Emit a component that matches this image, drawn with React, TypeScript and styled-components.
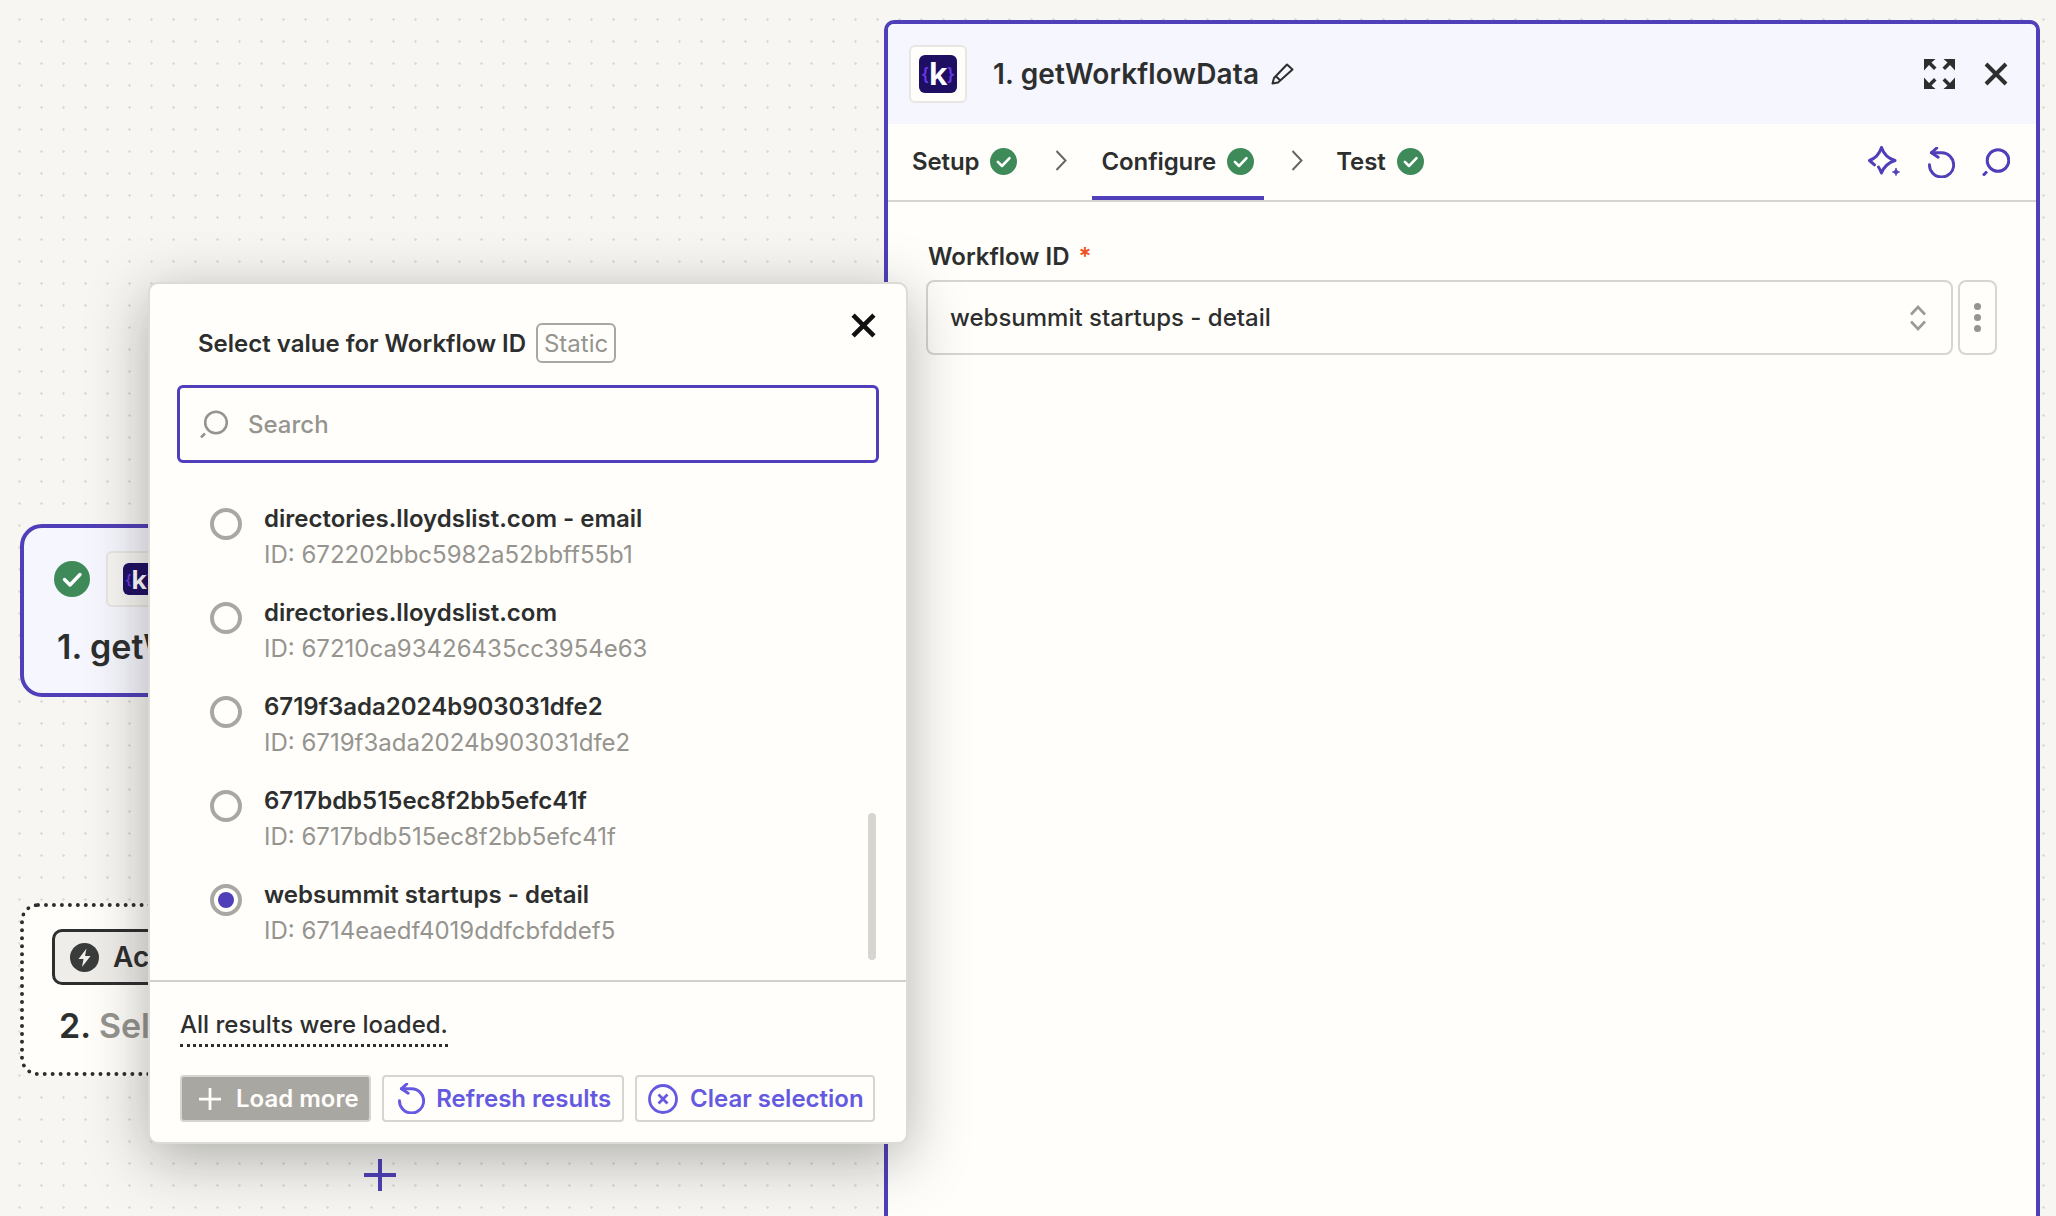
import React from "react";
import styled, { createGlobalStyle } from "styled-components";

const purple = "#4f3fb8";
const ink = "#2d2e2e";
const grey = "#95948f";
const line = "#d6d5d0";
const paper = "#fffefb";
const link = "#6459e0";

const GlobalStyle = createGlobalStyle`
  html, body {
    margin: 0;
    height: 100%;
    overflow: hidden;
  }
  body {
    font-family: Inter, "Liberation Sans", sans-serif;
    color: ${ink};
  }
  svg {
    display: block;
    flex: none;
  }
`;

const Canvas = styled.div`
  position: relative;
  width: 2056px;
  height: 1216px;
  overflow: hidden;
  display: flex;
  justify-content: flex-end;
  padding: 20px 16px 0 0;
  box-sizing: border-box;
  background-color: #f7f6f3;
  background-image: radial-gradient(circle at 19.5px 19.5px, #dcdbd6 1px, transparent 1.5px);
  background-size: 22px 22px;
`;

/* nodes sit on the free canvas, the modal covers their right side */
const Node = styled.div<{ $top: number; $dotted?: boolean }>`
  position: absolute;
  left: 20px;
  top: ${(p) => p.$top}px;
  width: 440px;
  height: 173px;
  box-sizing: border-box;
  border-radius: ${(p) => (p.$dotted ? 18 : 22)}px;
  border: 4px ${(p) => (p.$dotted ? `dotted ${ink}` : `solid ${purple}`)};
  background: ${(p) => (p.$dotted ? paper : "#f6f6fe")};
  padding: ${(p) => (p.$dotted ? "22px 0 0 28px" : "23px 0 0 30px")};
`;

const NodeTop = styled.div`
  display: flex;
  align-items: center;
  gap: 16px;
`;

const NodeTitle = styled.div<{ $dotted?: boolean }>`
  white-space: nowrap;
  font-size: 34px;
  font-weight: 600;
  line-height: 40px;
  margin: ${(p) => (p.$dotted ? "21px 0 0 7px" : "20px 0 0 3px")};
`;

const NodeHint = styled.span`
  color: ${grey};
`;

const ActionPill = styled.div`
  display: flex;
  align-items: center;
  gap: 14px;
  width: 170px;
  height: 56px;
  box-sizing: border-box;
  padding-left: 15px;
  border: 3px solid ${ink};
  border-radius: 10px;
  background: #eeedea;
  font-size: 28px;
  font-weight: 600;
`;

const LogoBox = styled.div<{ $size: number; $width?: number; $tint?: string }>`
  flex: none;
  width: ${(p) => p.$width ?? p.$size}px;
  height: ${(p) => p.$size}px;
  box-sizing: border-box;
  display: flex;
  align-items: center;
  justify-content: center;
  border: 2px solid #e8e7e3;
  border-radius: 6px;
  background: ${(p) => p.$tint ?? paper};
`;

const LogoMark = styled.div<{ $size: number }>`
  width: ${(p) => p.$size}px;
  height: ${(p) => p.$size}px;
  display: flex;
  align-items: center;
  justify-content: center;
  border-radius: 6px;
  background: #1f0f63;
  font-family: "Open Sans", Inter, sans-serif;
  font-size: ${(p) => Math.round(p.$size * 0.78)}px;
  line-height: 1;
  font-weight: 700;
  color: #fff;
`;

const Brace = styled.span`
  color: #6a3cf0;
  font-size: 0.58em;
  font-weight: 600;
`;

const Panel = styled.section`
  width: 1156px;
  height: 1240px;
  flex: none;
  box-sizing: border-box;
  border: 4px solid ${purple};
  border-radius: 10px;
  background: ${paper};
  overflow: hidden;
`;

const PanelHeader = styled.header`
  height: 100px;
  box-sizing: border-box;
  background: #f6f6fe;
  display: flex;
  align-items: center;
  padding: 0 28px 0 21px;
`;

const PanelTitle = styled.h1`
  margin: 0 12px 0 26px;
  font-size: 28px;
  font-weight: 600;
  letter-spacing: 0.15px;
  line-height: 36px;
`;

const HeaderTools = styled.div`
  margin-left: auto;
  display: flex;
  align-items: center;
  gap: 29px;
`;

const TabBar = styled.nav`
  height: 78px;
  box-sizing: border-box;
  border-bottom: 2px solid ${line};
  display: flex;
  padding-left: 15px;
`;

const Tab = styled.div<{ $active?: boolean }>`
  display: flex;
  align-items: center;
  gap: 11px;
  height: 76px;
  box-sizing: border-box;
  padding: 2px 10px 0 9px;
  border-bottom: 4px solid ${(p) => (p.$active ? purple : "transparent")};
  font-size: 24px;
  font-weight: 600;
  letter-spacing: -0.1px;
`;

const TabChevron = styled.div<{ $width: number }>`
  width: ${(p) => p.$width}px;
  height: 72px;
  box-sizing: border-box;
  padding-left: 3px;
  display: flex;
  align-items: center;
  justify-content: center;
`;

const TabTools = styled.div`
  margin-left: auto;
  display: flex;
  align-items: center;
  gap: 27px;
  padding-right: 26px;
`;

const Form = styled.div`
  padding: 37px 39px 0 38px;
`;

const FieldLabel = styled.label`
  display: block;
  margin-left: 2px;
  font-size: 24px;
  font-weight: 600;
  line-height: 36px;
`;

const Required = styled.span`
  color: #f0521e;
  margin-left: 9px;
`;

const FieldRow = styled.div`
  display: flex;
  gap: 5px;
  margin-top: 5px;
`;

const SelectBox = styled.div`
  flex: 1;
  height: 75px;
  box-sizing: border-box;
  display: flex;
  align-items: center;
  justify-content: space-between;
  padding: 0 25px 0 22px;
  border: 2px solid ${line};
  border-radius: 8px;
  font-size: 24px;
  font-weight: 500;
`;

const KebabButton = styled.div`
  width: 39px;
  height: 75px;
  box-sizing: border-box;
  display: flex;
  flex-direction: column;
  align-items: center;
  justify-content: center;
  gap: 4px;
  border: 2px solid ${line};
  border-radius: 8px;
`;

const KebabDot = styled.span`
  width: 7px;
  height: 7px;
  border-radius: 50%;
  background: ${grey};
`;

const Modal = styled.div`
  position: absolute;
  left: 148px;
  top: 282px;
  width: 760px;
  height: 862px;
  box-sizing: border-box;
  display: flex;
  flex-direction: column;
  border: 2px solid #dcdbd6;
  border-radius: 10px;
  background: ${paper};
  box-shadow: 0 14px 60px rgba(30, 30, 20, 0.34);
`;

const CloseButton = styled.div`
  position: absolute;
  top: 29px;
  right: 30px;
  color: #111;
`;

const ModalHeader = styled.div`
  display: flex;
  align-items: center;
  gap: 10px;
  padding: 39px 0 0 48px;
  font-size: 24px;
  font-weight: 600;
`;

const StaticBadge = styled.span`
  height: 40px;
  width: 80px;
  box-sizing: border-box;
  display: flex;
  align-items: center;
  justify-content: center;
  border: 2px solid #a8a7a2;
  border-radius: 6px;
  color: ${grey};
  font-weight: 400;
`;

const SearchBox = styled.div`
  width: 702px;
  height: 78px;
  box-sizing: border-box;
  flex: none;
  margin: 22px 0 0 27px;
  display: flex;
  align-items: center;
  gap: 20px;
  padding-left: 20px;
  border: 3px solid ${purple};
  border-radius: 6px;
  color: ${grey};
  font-size: 24px;
  font-weight: 500;
`;

const ResultList = styled.div`
  position: relative;
  flex: 1;
  padding: 37px 0 0 60px;
  display: flex;
  flex-direction: column;
  gap: 21px;
`;

const ScrollThumb = styled.div`
  position: absolute;
  top: 350px;
  right: 30px;
  width: 8px;
  height: 147px;
  border-radius: 4px;
  background: ${line};
`;

const ResultRow = styled.div`
  display: flex;
  gap: 22px;
`;

const Radio = styled.span<{ $on?: boolean }>`
  flex: none;
  width: 32px;
  height: 32px;
  margin-top: 8px;
  box-sizing: border-box;
  border: 4px solid #a8a7a2;
  border-radius: 50%;
  display: flex;
  align-items: center;
  justify-content: center;
  &::after {
    content: "";
    width: 16px;
    height: 16px;
    border-radius: 50%;
    background: ${(p) => (p.$on ? purple : "transparent")};
  }
`;

const ResultText = styled.div`
  padding-top: 1px;
`;

const ResultName = styled.div`
  font-size: 24px;
  font-weight: 600;
  line-height: 36px;
`;

const ResultId = styled.div`
  font-size: 24px;
  line-height: 36px;
  color: ${grey};
`;

const ModalFooter = styled.div`
  flex: none;
  height: 162px;
  box-sizing: border-box;
  border-top: 2px solid #d0cfcb;
  padding: 25px 30px 0;
`;

const LoadedNote = styled.span`
  display: inline-block;
  font-size: 24px;
  font-weight: 500;
  line-height: 36px;
  padding-bottom: 1px;
  border-bottom: 3px dotted ${ink};
`;

const ButtonRow = styled.div`
  display: flex;
  gap: 11px;
  margin-top: 28px;
`;

const ActionButton = styled.div<{ $solid?: boolean; $width: number; $gap: number; $left: number }>`
  width: ${(p) => p.$width}px;
  height: 47px;
  box-sizing: border-box;
  display: flex;
  align-items: center;
  gap: ${(p) => p.$gap}px;
  padding-left: ${(p) => p.$left}px;
  border: 2px solid ${line};
  border-radius: 4px;
  background: ${(p) => (p.$solid ? "#a8a7a2" : paper)};
  color: ${(p) => (p.$solid ? "#fffefb" : link)};
  font-size: 24px;
  font-weight: 600;
  white-space: nowrap;
`;

const AddStep = styled.div`
  position: absolute;
  left: 364px;
  top: 1159px;
`;

const CheckBadge = ({ size }: { size: number }) => (
  <svg width={size} height={size} viewBox="0 0 36 36">
    <circle cx="18" cy="18" r="18" fill="#3e8b59" />
    <path d="M10.5 18.5l5.5 5.5 10-10.5" fill="none" stroke="#fff" strokeWidth="3.4" strokeLinecap="round" strokeLinejoin="round" />
  </svg>
);

const Logo = ({ size }: { size: number }) => (
  <LogoMark $size={size}>
    <Brace>{"{"}</Brace>k<Brace>{"}"}</Brace>
  </LogoMark>
);

const SearchIcon = ({ color, weight }: { color: string; weight: number }) => (
  <svg width="28" height="28" viewBox="0 0 28 28" fill="none" stroke={color} strokeWidth={weight}>
    <circle cx="16" cy="12.500" r="10.800" />
    <path d="M5 23.500l-4 4" />
  </svg>
);

const UndoIcon = ({ height, color }: { height: number; color: string }) => (
  <svg width={(height * 28) / 32} height={height} viewBox="0 0 28 32" fill="none" stroke={color} strokeWidth="3" strokeLinecap="round" strokeLinejoin="round">
    <path d="M3.500 6H14A12.500 12.500 0 1 1 1.500 18.300" />
    <path d="M9 1L3.500 6l7 4.500" />
  </svg>
);

const ExpandIcon = () => (
  <svg width="31" height="30" viewBox="0 0 31 30" fill={ink} stroke="none">
    <path d="M0 0h11.500l-4 3.500 5 5-2.500 2.500-5-5-5 5.500z" />
    <path d="M31 0H19.500l4 3.500-5 5 2.500 2.500 5-5 5 5.500z" />
    <path d="M0 30h11.500l-4-3.500 5-5-2.500-2.500-5 5-5-5.500z" />
    <path d="M31 30H19.500l4-3.500-5-5 2.500-2.500 5 5 5-5.500z" />
  </svg>
);

const CloseIcon = ({ size, weight }: { size: number; weight: number }) => (
  <svg width={size} height={size} viewBox="0 0 24 24" fill="none" stroke="currentColor" strokeWidth={weight}>
    <path d="M2 2l20 20M22 2L2 22" />
  </svg>
);

const PencilIcon = () => (
  <svg width="24" height="22" viewBox="0 0 24 22" fill="none" stroke={ink} strokeWidth="2" strokeLinejoin="round">
    <path d="M1.500 20.500l1.500-5.500L16 1.500l5.500 5L7 19.500z" />
    <path d="M5 13.500l4.500 4" />
  </svg>
);

const SparkleIcon = () => (
  <svg width="33" height="32" viewBox="0 0 33 32" fill="none" stroke={purple} strokeWidth="3" strokeLinecap="round" strokeLinejoin="round">
    <path d="M6.500 18.800L1.500 14.500C7 12.500 11 9 13.500 1.500 16 9 20 12.500 27 14.500 20.500 16.500 16 20.500 13.500 27 12.500 24.500 11.500 22.500 10.500 21" />
    <path d="M28 22.500c.4 2 1.500 3.100 3.500 3.500-2 .4-3.100 1.500-3.500 3.500-.4-2-1.500-3.100-3.500-3.500 2-.4 3.100-1.500 3.500-3.500z" fill={purple} strokeWidth="1" />
  </svg>
);

const ChevronRight = () => (
  <svg width="12" height="21" viewBox="0 0 12 21" fill="none" stroke="#666" strokeWidth="2">
    <path d="M1.500 1l9 9.500-9 9.500" />
  </svg>
);

const UpDownIcon = () => (
  <svg width="16" height="26" viewBox="0 0 16 26" fill="none" stroke="#9b9a96" strokeWidth="2.600">
    <path d="M1 9.500l7-7.500 7 7.500" />
    <path d="M1 16.500l7 7.500 7-7.500" />
  </svg>
);

const PlusIcon = ({ size, color, weight }: { size: number; color: string; weight: number }) => (
  <svg width={size} height={size} viewBox="0 0 32 32" fill="none" stroke={color} strokeWidth={weight}>
    <path d="M16 0v32M0 16h32" />
  </svg>
);

const ClearIcon = () => (
  <svg width="30" height="30" viewBox="0 0 30 30" fill="none" stroke={link} strokeWidth="2.800">
    <circle cx="15" cy="15" r="13.500" />
    <path d="M10.500 10.500l9 9M19.500 10.500l-9 9" />
  </svg>
);

const BoltBadge = () => (
  <svg width="29" height="29" viewBox="0 0 29 29">
    <circle cx="14.500" cy="14.500" r="14.500" fill="#3a3b3b" />
    <path d="M16.500 5.500L8.500 16h5l-1.500 8 8.500-11h-5.500z" fill="#f2f1ee" />
  </svg>
);

const results = [
  { name: "directories.lloydslist.com - email", id: "672202bbc5982a52bbff55b1" },
  { name: "directories.lloydslist.com", id: "67210ca93426435cc3954e63" },
  { name: "6719f3ada2024b903031dfe2", id: "6719f3ada2024b903031dfe2" },
  { name: "6717bdb515ec8f2bb5efc41f", id: "6717bdb515ec8f2bb5efc41f" },
  { name: "websummit startups - detail", id: "6714eaedf4019ddfcbfddef5", selected: true },
];

const App = () => {
  return (
    <Canvas>
      <GlobalStyle />

      <Node $top={524}>
        <NodeTop>
          <CheckBadge size={36} />
          <LogoBox $size={56} $width={66} $tint="#f7f6f3">
            <Logo size={32} />
          </LogoBox>
        </NodeTop>
        <NodeTitle>1. getWorkflowData</NodeTitle>
      </Node>

      <Node $top={903} $dotted>
        <ActionPill>
          <BoltBadge />
          Action
        </ActionPill>
        <NodeTitle $dotted>
          2. <NodeHint>Select the event</NodeHint>
        </NodeTitle>
      </Node>

      <AddStep>
        <PlusIcon size={32} color={purple} weight={4} />
      </AddStep>

      <Panel>
        <PanelHeader>
          <LogoBox $size={58}>
            <Logo size={38} />
          </LogoBox>
          <PanelTitle>1. getWorkflowData</PanelTitle>
          <PencilIcon />
          <HeaderTools>
            <ExpandIcon />
            <CloseIcon size={24} weight={4} />
          </HeaderTools>
        </PanelHeader>

        <TabBar>
          <Tab>
            Setup <CheckBadge size={27} />
          </Tab>
          <TabChevron $width={65}>
            <ChevronRight />
          </TabChevron>
          <Tab $active>
            Configure <CheckBadge size={27} />
          </Tab>
          <TabChevron $width={63}>
            <ChevronRight />
          </TabChevron>
          <Tab>
            Test <CheckBadge size={27} />
          </Tab>
          <TabTools>
            <SparkleIcon />
            <UndoIcon height={31} color={purple} />
            <SearchIcon color={purple} weight={3} />
          </TabTools>
        </TabBar>

        <Form>
          <FieldLabel>
            Workflow ID<Required>*</Required>
          </FieldLabel>
          <FieldRow>
            <SelectBox>
              websummit startups - detail
              <UpDownIcon />
            </SelectBox>
            <KebabButton>
              <KebabDot />
              <KebabDot />
              <KebabDot />
            </KebabButton>
          </FieldRow>
        </Form>
      </Panel>

      <Modal>
        <CloseButton>
          <CloseIcon size={25} weight={4.4} />
        </CloseButton>
        <ModalHeader>
          Select value for Workflow ID
          <StaticBadge>Static</StaticBadge>
        </ModalHeader>
        <SearchBox>
          <SearchIcon color={grey} weight={2.6} />
          Search
        </SearchBox>
        <ResultList>
          {results.map((r) => (
            <ResultRow key={r.id}>
              <Radio $on={r.selected} />
              <ResultText>
                <ResultName>{r.name}</ResultName>
                <ResultId>ID: {r.id}</ResultId>
              </ResultText>
            </ResultRow>
          ))}
          <ScrollThumb />
        </ResultList>
        <ModalFooter>
          <LoadedNote>All results were loaded.</LoadedNote>
          <ButtonRow>
            <ActionButton $solid $width={191} $gap={15} $left={17}>
              <PlusIcon size={22} color="#fffefb" weight={4} />
              Load more
            </ActionButton>
            <ActionButton $width={242} $gap={11} $left={14}>
              <UndoIcon height={31} color={link} />
              Refresh results
            </ActionButton>
            <ActionButton $width={240} $gap={12} $left={11}>
              <ClearIcon />
              Clear selection
            </ActionButton>
          </ButtonRow>
        </ModalFooter>
      </Modal>
    </Canvas>
  );
};

export default App;
